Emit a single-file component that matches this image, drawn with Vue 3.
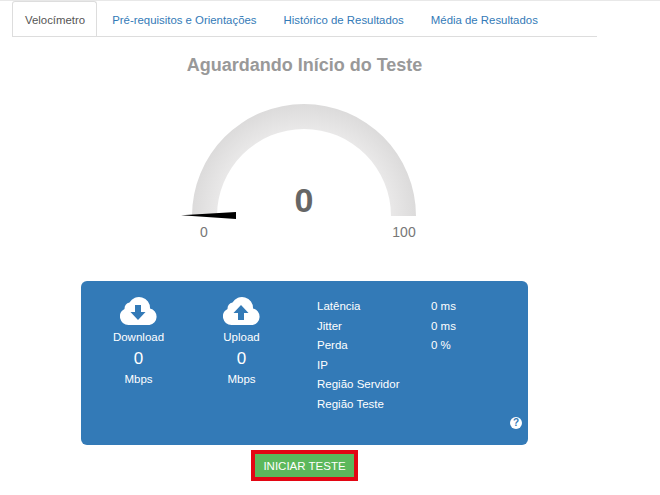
<script setup>
const tabs = ['Velocímetro', 'Pré-requisitos e Orientações', 'Histórico de Resultados', 'Média de Resultados']

const speeds = [
  { label: 'Download', arrow: 'M15 8h6v7h4.500l-7.500 8-7.500-8h4.500z' },
  { label: 'Upload', arrow: 'M15 23v-7h-4.500l7.500-8 7.500 8h-4.500v7z' },
]

const stats = [
  { label: 'Latência', value: '0 ms' },
  { label: 'Jitter', value: '0 ms' },
  { label: 'Perda', value: '0 %' },
  { label: 'IP', value: '' },
  { label: 'Região Servidor', value: '' },
  { label: 'Região Teste', value: '' },
]
</script>

<template>
  <div class="page">
    <div class="content">
      <ul class="tabs">
        <li v-for="(tab, i) in tabs" :key="tab" class="tab" :class="{ active: i === 0 }">{{ tab }}</li>
      </ul>

      <h1 class="title">Aguardando Início do Teste</h1>

      <svg class="gauge" width="261" height="150" viewBox="4 0 261 150">
        <defs>
          <radialGradient id="arc" gradientUnits="userSpaceOnUse" cx="134" cy="121" r="112">
            <stop offset="0.78" stop-color="#e9e8e8" />
            <stop offset="1" stop-color="#dcdbdb" />
          </radialGradient>
        </defs>
        <path d="M22 121a112 112 0 0 1 224 0h-25a87 87 0 0 0-174 0z" fill="url(#arc)" />
        <path d="M11 120.300L66 117v7z" fill="#000" />
        <text x="134" y="117" class="gauge-value" text-anchor="middle">0</text>
        <text x="34" y="142" class="gauge-end" text-anchor="middle">0</text>
        <text x="234" y="142" class="gauge-end" text-anchor="middle">100</text>
      </svg>

      <section class="panel">
        <div class="speed" v-for="s in speeds" :key="s.label">
          <svg width="38" height="28" viewBox="0 0 38 28">
            <path
              d="M8.500 28A8.500 8.500 0 0 1 4.500 12 6.500 6.500 0 0 1 9.500 5.500 11 11 0 0 1 30 11.500 8.400 8.400 0 0 1 29.500 28z"
              fill="#fff"
            />
            <path :d="s.arrow" fill="#337ab7" />
          </svg>
          <span class="speed-label">{{ s.label }}</span>
          <span class="speed-value">0</span>
          <span class="speed-unit">Mbps</span>
        </div>

        <dl class="stats">
          <div class="stat" v-for="s in stats" :key="s.label">
            <dt>{{ s.label }}</dt>
            <dd>{{ s.value }}</dd>
          </div>
        </dl>

        <span class="help">?</span>
      </section>

      <button class="start">INICIAR TESTE</button>
    </div>
  </div>
</template>

<style scoped>
.page {
  width: 660px;
  height: 495px;
  overflow: hidden;
  font-family: "Liberation Sans", Arial, sans-serif;
  font-size: 11.500px;
  color: #555;
  background: #fff;
  border-top: 1px solid #e8e8e8;
  box-sizing: border-box;
}
.content {
  width: 609px;
  display: flex;
  flex-direction: column;
  align-items: center;
}
.tabs {
  align-self: flex-start;
  display: flex;
  width: 585px;
  height: 35px;
  margin: 0 0 0 12px;
  padding: 0;
  list-style: none;
  border-bottom: 1px solid #ddd;
  font-size: 11.400px;
}
.tab {
  padding: 10px 12px 0;
  margin-right: 1px;
  line-height: 16px;
  color: #337ab7;
  border: 1px solid transparent;
  border-bottom: 0;
}
.tab.active {
  height: 35px;
  padding-right: 11px;
  margin-right: 2px;
  color: #555;
  background: #fff;
  border-color: #ddd;
  border-radius: 3px 3px 0 0;
  box-sizing: border-box;
}
.title {
  margin: 17px 0 0;
  font-size: 18px;
  line-height: 22px;
  font-weight: bold;
  color: #999;
}
.gauge {
  display: block;
  margin-top: 19px;
}
.gauge-value {
  font-size: 34px;
  font-weight: bold;
  fill: #666;
}
.gauge-end {
  font-size: 14px;
  fill: #777;
}
.panel {
  position: relative;
  display: flex;
  width: 447px;
  height: 164px;
  margin-top: 36px;
  background: #337ab7;
  border-radius: 6px;
  color: #fff;
  box-sizing: border-box;
  padding: 16px 0 0 6px;
}
.speed {
  width: 103px;
  display: flex;
  flex-direction: column;
  align-items: center;
}
.speed-label {
  margin-top: 4px;
  line-height: 16px;
}
.speed-value {
  margin-top: 4px;
  font-size: 17px;
  line-height: 20px;
}
.speed-unit {
  margin-top: 2px;
  line-height: 16px;
}
.stats {
  margin: 0 0 0 24px;
}
.stat {
  display: flex;
  height: 19.600px;
  line-height: 19.600px;
}
.stat dt {
  width: 114px;
}
.stat dd {
  margin: 0;
}
.help {
  position: absolute;
  right: 6px;
  bottom: 16px;
  width: 12px;
  height: 12px;
  border-radius: 50%;
  background: #fff;
  color: #337ab7;
  font-size: 10px;
  font-weight: bold;
  line-height: 12px;
  text-align: center;
}
.start {
  margin-top: 5px;
  width: 107px;
  height: 31px;
  padding: 0;
  background: #5cb85c;
  border: 4px solid #e30613;
  color: #fff;
  font-family: inherit;
  font-size: 11.500px;
  box-sizing: border-box;
}
</style>
